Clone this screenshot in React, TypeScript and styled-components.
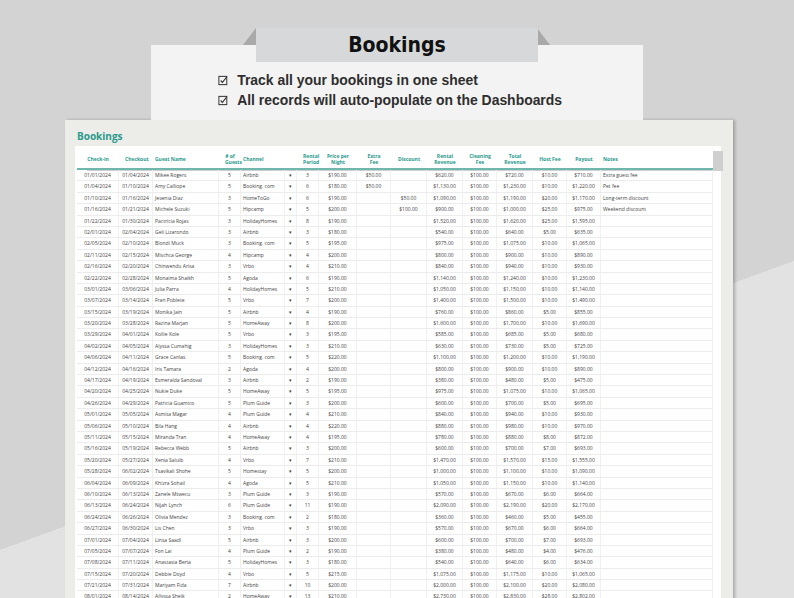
import React from 'react';
import styled, { createGlobalStyle } from 'styled-components';

const GlobalStyle = createGlobalStyle`
  html, body { margin: 0; padding: 0; }
  body {
    width: 794px; height: 598px; overflow: hidden;
    font-family: "Liberation Sans", Arial, sans-serif;
  }
`;

const Page = styled.div`
  width: 794px;
  height: 598px;
  overflow: hidden;
  background:
    linear-gradient(160deg, transparent 62%, rgba(255,255,255,0.35) 62%),
    #d3d3d3;
  display: flex;
  flex-direction: column;
  align-items: center;
`;

const Top = styled.div`
  position: relative;
  width: 492px;
  height: 120px;
  flex: none;
  margin-left: 0;
`;

const TabShadow = styled.div`
  position: absolute;
  left: 92px;
  top: 28px;
  width: 307px;
  height: 17px;
  background: #a9a9a9;
  clip-path: polygon(13px 0, 294px 0, 307px 17px, 0 17px);
  z-index: 1;
`;

const Tab = styled.div`
  position: absolute;
  left: 105px;
  top: 28px;
  width: 282px;
  height: 34px;
  background: #d7d8d9;
  display: flex;
  align-items: center;
  justify-content: center;
  font-family: "DejaVu Sans Condensed", "DejaVu Sans", sans-serif;
  font-weight: 700;
  font-size: 21px;
  color: #111;
  z-index: 2;
`;

const Card = styled.div`
  margin-top: 45px;
  height: 75px;
  background: #f3f3f3;
  display: flex;
  flex-direction: column;
  padding: 27px 0 0 67px;
  box-sizing: border-box;
  gap: 4px;
`;

const Bullet = styled.div`
  display: flex;
  align-items: center;
  gap: 9px;
  font-size: 14.5px;
  font-weight: 700;
  color: #2e2e2e;
  transform: scaleX(0.96);
  transform-origin: left;
  svg { flex: none; }
`;

const Sheet = styled.div`
  width: 668px;
  margin-left: 4px;
  flex: 1;
  background: #ecece9;
  box-shadow: 2px 0 3px rgba(0,0,0,0.25);
  padding: 9px 0 0 10px;
  box-sizing: border-box;
  display: flex;
  flex-direction: column;
`;

const SheetTitle = styled.div`
  font-family: "Open Sans", sans-serif;
  font-weight: 700;
  font-size: 10px;
  color: #2a9a8c;
  padding-left: 2px;
  height: 17px;
`;

const Inner = styled.div`
  background: #fff;
  width: 646px;
  flex: 1;
  padding: 4px 0 0 2px;
  box-sizing: border-box;
  font-family: "Open Sans", sans-serif;
`;

const cols = '42px 34px 66px 22px 44px 12px 22px 38px 34px 36px 36px 34px 36px 34px 34px 112px';

const HeadRow = styled.div`
  display: grid;
  grid-template-columns: ${cols};
  width: 636px;
  height: 18px;
  align-items: center;
  border-bottom: 2px solid #6fb7ac;
  box-shadow: 10px 1px 0 #cfcfcf;
`;

const HeadCell = styled.div<{ $left?: boolean }>`
  font-size: 5px;
  line-height: 6px;
  font-weight: 700;
  color: #2a9a8c;
  text-align: ${(p) => (p.$left ? 'left' : 'center')};
  padding: ${(p) => (p.$left ? '0 0 0 2px' : '0 6px')};
`;

const Row = styled.div`
  display: grid;
  grid-template-columns: ${cols};
  height: 10.4px;
  align-items: center;
  border-bottom: 0.5px solid #ececec;
  width: 636px;
`;

const Cell = styled.div<{ $align?: string }>`
  font-size: 5px;
  color: #444;
  white-space: nowrap;
  overflow: hidden;
  text-align: ${(p) => p.$align || 'center'};
  padding-left: ${(p) => (p.$align === 'left' ? '2px' : 0)};
  border-right: 0.5px solid #f0f0f0;
  height: 100%;
  line-height: 10.4px;
`;

const Check = () => (
  <svg width="11" height="11" viewBox="0 0 12 12">
    <rect x="1" y="1.5" width="9" height="9" fill="none" stroke="#333" strokeWidth="1.1" />
    <path d="M3 6l2 2 5-6" fill="none" stroke="#333" strokeWidth="1.2" />
  </svg>
);

const raw = `01/01/2024|01/04/2024|Mikee Rogers|5|Airbnb|3|$190.00|$50.00||$620.00|$720.00|$10.00|$710.00|Extra guest fee
01/04/2024|01/10/2024|Amy Calliope|5|Booking. com|6|$180.00|$50.00||$1,130.00|$1,230.00|$10.00|$1,220.00|Pet fee
01/10/2024|01/16/2024|Jesenia Diaz|3|HomeToGo|6|$190.00||$50.00|$1,090.00|$1,190.00|$20.00|$1,170.00|Long-term discount
01/16/2024|01/21/2024|Michele Suzuki|5|Hipcamp|5|$200.00||$100.00|$900.00|$1,000.00|$25.00|$975.00|Weekend discount
01/22/2024|01/30/2024|Pactricia Rojas|3|HolidayHomes|8|$190.00|||$1,520.00|$1,620.00|$25.00|$1,595.00|
02/01/2024|02/04/2024|Geli Lizarondo|3|Airbnb|3|$180.00|||$540.00|$640.00|$5.00|$635.00|
02/05/2024|02/10/2024|Blondi Muck|3|Booking. com|5|$195.00|||$975.00|$1,075.00|$10.00|$1,065.00|
02/11/2024|02/15/2024|Mischca George|4|Hipcamp|4|$200.00|||$800.00|$900.00|$10.00|$890.00|
02/16/2024|02/20/2024|Chinwendu Arisa|3|Vrbo|4|$210.00|||$840.00|$940.00|$10.00|$930.00|
02/22/2024|02/28/2024|Monaima Shaikh|5|Agoda|6|$190.00|||$1,140.00|$1,240.00|$10.00|$1,230.00|
03/01/2024|03/06/2024|Julia Parra|4|HolidayHomes|5|$210.00|||$1,050.00|$1,150.00|$10.00|$1,140.00|
03/07/2024|03/14/2024|Fran Poblete|5|Vrbo|7|$200.00|||$1,400.00|$1,500.00|$10.00|$1,490.00|
03/15/2024|03/19/2024|Monika Jain|5|Airbnb|4|$190.00|||$760.00|$860.00|$5.00|$855.00|
03/20/2024|03/28/2024|Razina Marjan|5|HomeAway|8|$200.00|||$1,600.00|$1,700.00|$10.00|$1,690.00|
03/29/2024|04/01/2024|Kollie Kole|5|Vrbo|3|$195.00|||$585.00|$685.00|$5.00|$680.00|
04/02/2024|04/05/2024|Alyssa Cumahig|3|HolidayHomes|3|$210.00|||$630.00|$730.00|$5.00|$725.00|
04/06/2024|04/11/2024|Grace Canlas|5|Booking. com|5|$220.00|||$1,100.00|$1,200.00|$10.00|$1,190.00|
04/12/2024|04/16/2024|Iris Tamara|2|Agoda|4|$200.00|||$800.00|$900.00|$10.00|$890.00|
04/17/2024|04/19/2024|Esmeralda Sandoval|3|Airbnb|2|$190.00|||$380.00|$480.00|$5.00|$475.00|
04/20/2024|04/25/2024|Nukie Duke|5|HomeAway|5|$195.00|||$975.00|$1,075.00|$10.00|$1,065.00|
04/26/2024|04/29/2024|Patricia Guamico|5|Plum Guide|3|$200.00|||$600.00|$700.00|$5.00|$695.00|
05/01/2024|05/05/2024|Asmita Magar|4|Plum Guide|4|$210.00|||$840.00|$940.00|$10.00|$930.00|
05/06/2024|05/10/2024|Bila Hang|4|Airbnb|4|$220.00|||$880.00|$980.00|$10.00|$970.00|
05/11/2024|05/15/2024|Miranda Tran|4|HomeAway|4|$195.00|||$780.00|$880.00|$8.00|$872.00|
05/16/2024|05/19/2024|Rebecca Webb|5|Airbnb|3|$200.00|||$600.00|$700.00|$7.00|$693.00|
05/20/2024|05/27/2024|Xenia Saluib|4|Vrbo|7|$210.00|||$1,470.00|$1,570.00|$15.00|$1,555.00|
05/28/2024|06/02/2024|Tsavikali Shohe|5|Homestay|5|$200.00|||$1,000.00|$1,100.00|$10.00|$1,090.00|
06/04/2024|06/09/2024|Khizra Sohail|4|Agoda|5|$210.00|||$1,050.00|$1,150.00|$10.00|$1,140.00|
06/10/2024|06/13/2024|Zanele Mtwecu|3|Plum Guide|3|$190.00|||$570.00|$670.00|$6.00|$664.00|
06/13/2024|06/24/2024|Nijah Lynch|6|Plum Guide|11|$190.00|||$2,090.00|$2,190.00|$20.00|$2,170.00|
06/24/2024|06/26/2024|Olivia Mendez|3|Booking. com|2|$180.00|||$360.00|$460.00|$5.00|$455.00|
06/27/2024|06/30/2024|Lis Chen|3|Vrbo|3|$190.00|||$570.00|$670.00|$6.00|$664.00|
07/01/2024|07/04/2024|Linsa Saadi|5|Airbnb|3|$200.00|||$600.00|$700.00|$7.00|$693.00|
07/05/2024|07/07/2024|Fon Lai|4|Plum Guide|2|$190.00|||$380.00|$480.00|$4.00|$476.00|
07/08/2024|07/11/2024|Anastasia Beria|5|HolidayHomes|3|$180.00|||$540.00|$640.00|$6.00|$634.00|
07/15/2024|07/20/2024|Debbie Doyd|4|Vrbo|5|$215.00|||$1,075.00|$1,175.00|$10.00|$1,065.00|
07/21/2024|07/31/2024|Mariyam Fida|7|Airbnb|10|$200.00|||$2,000.00|$2,100.00|$20.00|$2,080.00|
08/01/2024|08/14/2024|Allyssa Sheik|2|HomeAway|13|$210.00|||$2,730.00|$2,830.00|$28.00|$2,802.00|
08/15/2024|08/20/2024|Akalisa Tifany|6|Vrbo|5|$190.00|||$950.00|$1,050.00|$10.00|$1,040.00|
08/21/2024|08/28/2024|Ananya Choudhury|4|Booking. com|7|$210.00|||$1,470.00|$1,570.00|$15.00|$1,555.00|
09/01/2024|09/03/2024|Daniel Moore|4|HolidayHomes|2|$200.00|||$400.00|$500.00|$5.00|$495.00|`;

const rows = raw.split('\n').map((l) => l.split('|'));

const heads: [string, boolean?][] = [
  ['Check-in'], ['Checkout'], ['Guest Name', true], ['# of Guests'], ['Channel', true], [''],
  ['Rental Period'], ['Price per Night'], ['Extra Fee'], ['Discount'], ['Rental Revenue'],
  ['Cleaning Fee'], ['Total Revenue'], ['Host Fee'], ['Payout'], ['Notes', true],
];

export default function App() {
  return (
    <>
      <GlobalStyle />
      <Page>
        <Top>
          <TabShadow />
          <Tab>Bookings</Tab>
          <Card>
            <Bullet><Check />Track all your bookings in one sheet</Bullet>
            <Bullet><Check />All records will auto-populate on the Dashboards</Bullet>
          </Card>
        </Top>
        <Sheet>
          <SheetTitle>Bookings</SheetTitle>
          <Inner>
            <HeadRow>
              {heads.map(([h, left], i) => (
                <HeadCell key={i} $left={left}>{h}</HeadCell>
              ))}
            </HeadRow>
            {rows.map((r, i) => (
              <Row key={i}>
                <Cell>{r[0]}</Cell>
                <Cell>{r[1]}</Cell>
                <Cell $align="left">{r[2]}</Cell>
                <Cell>{r[3]}</Cell>
                <Cell $align="left">{r[4]}</Cell>
                <Cell>▾</Cell>
                <Cell>{r[5]}</Cell>
                <Cell>{r[6]}</Cell>
                <Cell>{r[7]}</Cell>
                <Cell>{r[8]}</Cell>
                <Cell>{r[9]}</Cell>
                <Cell>$100.00</Cell>
                <Cell>{r[10]}</Cell>
                <Cell>{r[11]}</Cell>
                <Cell>{r[12]}</Cell>
                <Cell $align="left">{r[13]}</Cell>
              </Row>
            ))}
          </Inner>
        </Sheet>
      </Page>
    </>
  );
}
